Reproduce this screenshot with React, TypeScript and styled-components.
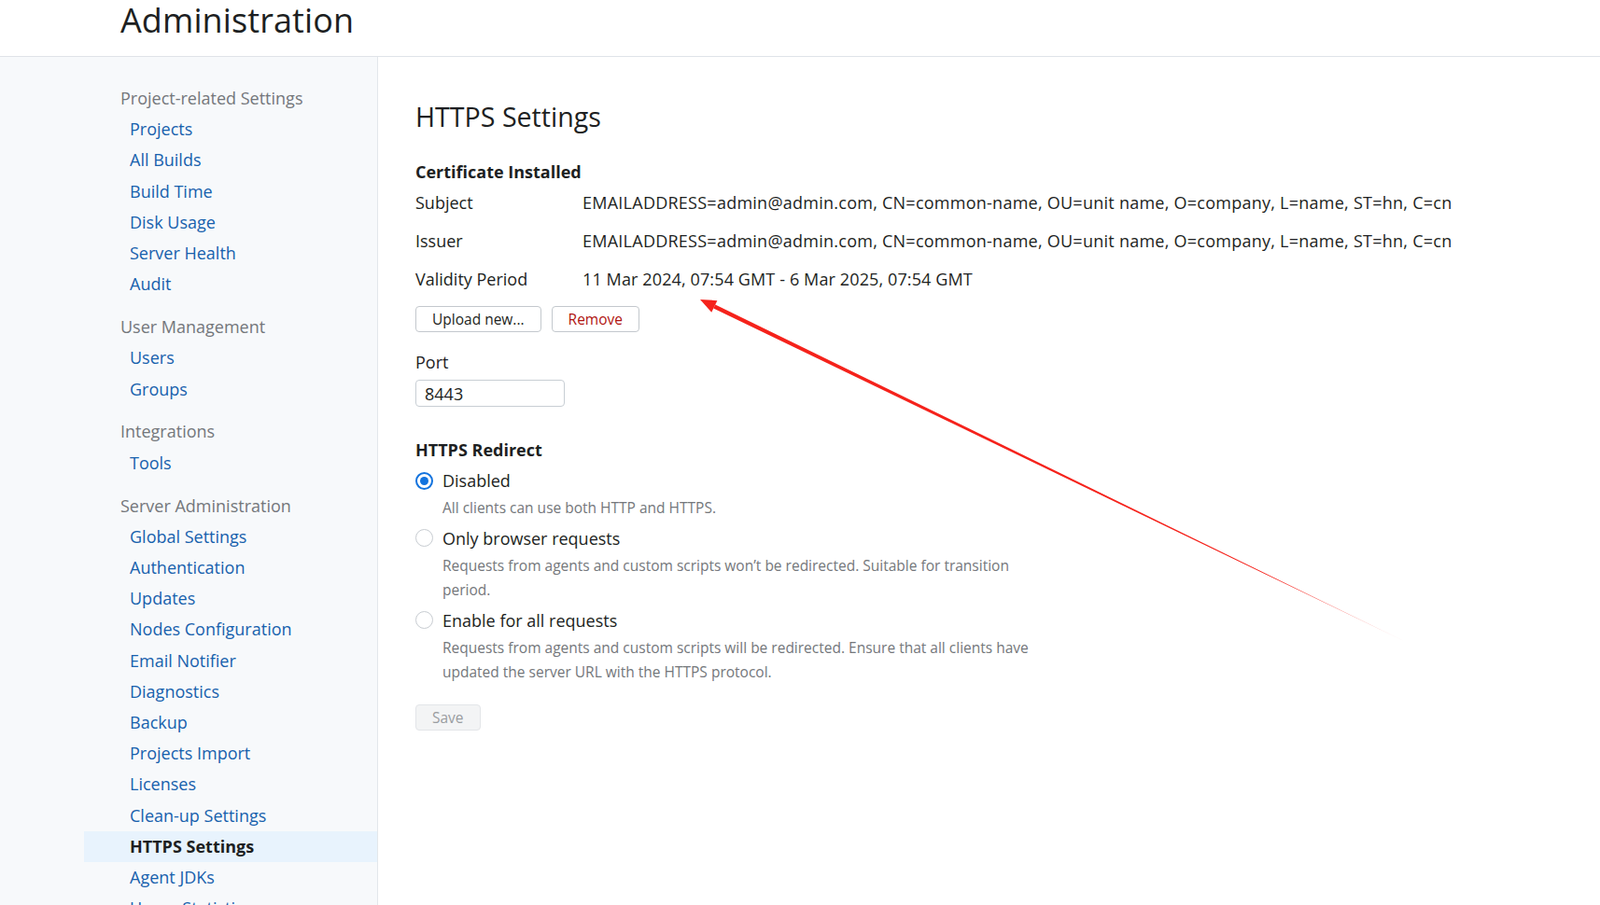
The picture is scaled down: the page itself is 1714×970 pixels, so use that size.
import React from "react";
import styled, { createGlobalStyle } from "styled-components";

const GlobalStyle = createGlobalStyle`
  html, body {
    margin: 0;
    padding: 0;
    background: #ffffff;
  }
  body {
    font-family: "Open Sans", "Noto Sans", "Liberation Sans", sans-serif;
    color: #1f2226;
    overflow: hidden;
  }
`;

const Page = styled.div`
  position: relative;
  height: 970px;
  display: flex;
  flex-direction: column;
  overflow: hidden;
`;

const Header = styled.header`
  height: 60px;
  flex: none;
  border-bottom: 1px solid #dfe3e8;
  padding-left: 129px;
  display: flex;
  align-items: flex-start;
`;

const Title = styled.h1`
  margin: 0;
  font-size: 36px;
  font-weight: 400;
  line-height: 44px;
  color: #1d1f22;
  letter-spacing: 0.1px;
`;

const Body = styled.div`
  flex: 1;
  display: flex;
  min-height: 0;
`;

const Sidebar = styled.nav`
  width: 405px;
  flex: none;
  box-sizing: border-box;
  background: #f7f9fb;
  border-right: 1px solid #e3e7eb;
  padding: 28px 0 0 90px;
  overflow: hidden;
`;

const Group = styled.div`
  & + & {
    margin-top: 12.7px;
  }
`;

const GroupTitle = styled.div`
  font-size: 18px;
  line-height: 33.2px;
  color: #74777b;
  padding-left: 39px;
`;

const NavItem = styled.a<{ $active?: boolean }>`
  display: block;
  font-size: 18px;
  line-height: 33.2px;
  padding-left: 49px;
  text-decoration: none;
  color: ${(p) => (p.$active ? "#1d1f22" : "#1761ad")};
  font-weight: ${(p) => (p.$active ? 700 : 400)};
  background: ${(p) => (p.$active ? "#e8f3fd" : "transparent")};
  white-space: nowrap;
`;

const Main = styled.main`
  flex: 1;
  padding: 46px 40px 0 40px;
`;

const PageTitle = styled.h2`
  margin: 0 0 29px;
  font-size: 28.6px;
  font-weight: 400;
  line-height: 36px;
  color: #1d1f22;
`;

const SectionTitle = styled.div<{ $top?: number }>`
  font-size: 18px;
  font-weight: 700;
  line-height: 24px;
  color: #1d1f22;
  margin-top: ${(p) => p.$top ?? 0}px;
`;

const InfoTable = styled.div`
  display: grid;
  grid-template-columns: 179px auto;
  grid-auto-rows: 41px;
  align-items: center;
  font-size: 18px;
  line-height: 26px;
`;

const InfoLabel = styled.div`
  color: #1d1f22;
`;

const InfoValue = styled.div<{ $spacing?: number }>`
  color: #1d1f22;
  white-space: nowrap;
  letter-spacing: ${(p) => p.$spacing ?? 0}px;
`;

const ButtonRow = styled.div`
  display: flex;
  gap: 11px;
  margin-top: 9px;
`;

const Button = styled.button<{ $danger?: boolean; $disabled?: boolean }>`
  height: 28px;
  padding: 0 17px;
  font-family: inherit;
  font-size: 15.5px;
  border-radius: 4px;
  border: 1px solid ${(p) => (p.$disabled ? "#e3e5e8" : "#c3c8cd")};
  background: ${(p) => (p.$disabled ? "#f3f4f5" : "#ffffff")};
  color: ${(p) => (p.$danger ? "#b0140f" : p.$disabled ? "#9a9da1" : "#1d1f22")};
  cursor: pointer;
`;

const FieldLabel = styled.div`
  margin-top: 19px;
  font-size: 18px;
  line-height: 26px;
`;

const TextInput = styled.input`
  display: block;
  margin-top: 6px;
  box-sizing: border-box;
  width: 160px;
  height: 29px;
  padding: 0 9px;
  font-family: inherit;
  font-size: 18px;
  color: #1d1f22;
  border: 1px solid #c8ced4;
  border-radius: 4px;
  outline: none;
`;

const Options = styled.div`
  margin-top: 8px;
  display: flex;
  flex-direction: column;
  gap: 6px;
  width: 660px;
`;

const Option = styled.div`
  display: grid;
  grid-template-columns: 29px 1fr;
  align-items: center;
`;

const Radio = styled.span<{ $checked?: boolean }>`
  width: 19px;
  height: 19px;
  box-sizing: border-box;
  border-radius: 50%;
  border: ${(p) => (p.$checked ? "2px solid #1273de" : "1px solid #c7ccd1")};
  display: flex;
  align-items: center;
  justify-content: center;
  &::after {
    content: "";
    width: 9px;
    height: 9px;
    border-radius: 50%;
    background: ${(p) => (p.$checked ? "#1273de" : "transparent")};
  }
`;

const OptionLabel = styled.div`
  font-size: 18px;
  line-height: 26px;
  color: #1d1f22;
`;

const OptionHint = styled.div`
  grid-column: 2;
  margin-top: 3px;
  font-size: 15.5px;
  line-height: 26.5px;
  color: #74777b;
  max-width: 630px;
`;

const SaveRow = styled.div`
  margin-top: 21px;
`;

const Annotation = styled.svg`
  position: absolute;
  left: 0;
  top: 0;
  pointer-events: none;
`;

const groups: { title: string; items: string[] }[] = [
  {
    title: "Project-related Settings",
    items: ["Projects", "All Builds", "Build Time", "Disk Usage", "Server Health", "Audit"],
  },
  { title: "User Management", items: ["Users", "Groups"] },
  { title: "Integrations", items: ["Tools"] },
  {
    title: "Server Administration",
    items: [
      "Global Settings",
      "Authentication",
      "Updates",
      "Nodes Configuration",
      "Email Notifier",
      "Diagnostics",
      "Backup",
      "Projects Import",
      "Licenses",
      "Clean-up Settings",
      "HTTPS Settings",
      "Agent JDKs",
      "Usage Statistics",
    ],
  },
];

const dn =
  "EMAILADDRESS=admin@admin.com, CN=common-name, OU=unit name, O=company, L=name, ST=hn, C=cn";

const options = [
  { label: "Disabled", hint: "All clients can use both HTTP and HTTPS.", checked: true },
  {
    label: "Only browser requests",
    hint: "Requests from agents and custom scripts won’t be redirected. Suitable for transition period.",
  },
  {
    label: "Enable for all requests",
    hint: "Requests from agents and custom scripts will be redirected. Ensure that all clients have updated the server URL with the HTTPS protocol.",
  },
];

function Arrow() {
  // red pointer drawn over the page, tip near the validity period
  const tip = [750, 321];
  const tail = [1508, 689];
  const dx = tail[0] - tip[0];
  const dy = tail[1] - tip[1];
  const len = Math.hypot(dx, dy);
  const ux = dx / len;
  const uy = dy / len;
  const px = -uy;
  const py = ux;
  const bx = tip[0] + ux * 17;
  const by = tip[1] + uy * 17;
  const head = `${tip[0]},${tip[1]} ${bx + px * 7},${by + py * 7} ${bx - px * 7},${by - py * 7}`;
  const shaft = `${bx + px * 2.2},${by + py * 2.2} ${tail[0]},${tail[1]} ${bx - px * 2.2},${by - py * 2.2}`;
  return (
    <Annotation width="1714" height="970" viewBox="0 0 1714 970">
      <defs>
        <linearGradient id="fade" gradientUnits="userSpaceOnUse" x1={tip[0]} y1={tip[1]} x2={tail[0]} y2={tail[1]}>
          <stop offset="0" stopColor="#f5221b" stopOpacity="1" />
          <stop offset="0.8" stopColor="#f5221b" stopOpacity="1" />
          <stop offset="1" stopColor="#f5221b" stopOpacity="0.15" />
        </linearGradient>
      </defs>
      <polygon points={shaft} fill="url(#fade)" />
      <polygon points={head} fill="#f5221b" />
    </Annotation>
  );
}

export default function App() {
  return (
    <Page>
      <GlobalStyle />
      <Header>
        <Title>Administration</Title>
      </Header>
      <Body>
        <Sidebar>
          {groups.map((g) => (
            <Group key={g.title}>
              <GroupTitle>{g.title}</GroupTitle>
              {g.items.map((item) => (
                <NavItem key={item} href="#" $active={item === "HTTPS Settings"}>
                  {item}
                </NavItem>
              ))}
            </Group>
          ))}
        </Sidebar>
        <Main>
          <PageTitle>HTTPS Settings</PageTitle>
          <SectionTitle>Certificate Installed</SectionTitle>
          <InfoTable>
            <InfoLabel>Subject</InfoLabel>
            <InfoValue $spacing={0.25}>{dn}</InfoValue>
            <InfoLabel>Issuer</InfoLabel>
            <InfoValue $spacing={0.25}>{dn}</InfoValue>
            <InfoLabel>Validity Period</InfoLabel>
            <InfoValue $spacing={0.12}>11 Mar 2024, 07:54 GMT - 6 Mar 2025, 07:54 GMT</InfoValue>
          </InfoTable>
          <ButtonRow>
            <Button>Upload new...</Button>
            <Button $danger>Remove</Button>
          </ButtonRow>
          <FieldLabel>Port</FieldLabel>
          <TextInput defaultValue="8443" />
          <SectionTitle $top={34}>HTTPS Redirect</SectionTitle>
          <Options>
            {options.map((o) => (
              <Option key={o.label}>
                <Radio $checked={o.checked} />
                <OptionLabel>{o.label}</OptionLabel>
                <OptionHint>{o.hint}</OptionHint>
              </Option>
            ))}
          </Options>
          <SaveRow>
            <Button $disabled>Save</Button>
          </SaveRow>
        </Main>
      </Body>
      <Arrow />
    </Page>
  );
}
